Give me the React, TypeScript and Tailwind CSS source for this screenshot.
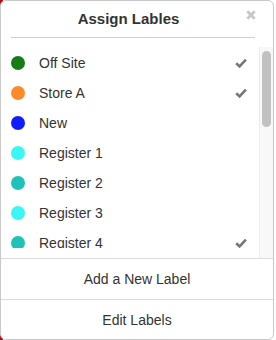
import React from 'react';

type Label = { name: string; color: string; checked?: boolean };

const labels: Label[] = [
  { name: 'Off Site', color: '#167d16', checked: true },
  { name: 'Store A', color: '#ff8a2c', checked: true },
  { name: 'New', color: '#0f1cff' },
  { name: 'Register 1', color: '#3af7f3' },
  { name: 'Register 2', color: '#1fc2b8' },
  { name: 'Register 3', color: '#3af7f3' },
  { name: 'Register 4', color: '#1fc2b8', checked: true },
];

function Check() {
  return (
    <svg width="12" height="10" viewBox="0 0 12 10" className="shrink-0">
      <path d="M1.2 5.2 L4.6 8.4 L10.9 1.6" fill="none" stroke="#777" strokeWidth="2.6" strokeLinejoin="miter" />
    </svg>
  );
}

export default function App() {
  return (
    <div
      className="w-[276px] h-[340px] bg-[linear-gradient(to_right,#a8141e_0,#a8141e_3px,#ffffff_3px)]"
      style={{ fontFamily: '"Liberation Sans", Arial, sans-serif' }}
    >
      <div className="w-[274px] h-[340px] bg-white border border-[#c9c9c9] rounded-[6px] flex flex-col overflow-hidden">
        {/* Header */}
        <div className="px-[10px]">
          <div className="h-[36px] flex items-center">
            <h3 className="flex-1 text-center text-[15px] font-bold text-[#333] leading-[20px] -mt-[1px]">Assign Lables</h3>
            <button className="w-[17px] self-start mt-[9px] flex items-start justify-start">
              <svg width="10" height="10" viewBox="0 0 10 10">
                <path d="M1.3 1.3 L8.7 8.7 M8.7 1.3 L1.3 8.7" stroke="#c8c8c8" strokeWidth="2.8" />
              </svg>
            </button>
          </div>
          <div className="h-px bg-[#cfcfcf] mr-[8px]" />
        </div>

        <div className="h-[9px]" />

        {/* List + scrollbar */}
        <div className="h-[211px] flex">
          <div className="flex-1 flex flex-col">
            <ul className="h-[201px] overflow-hidden pt-[1px]">
              {labels.map((l) => (
                <li key={l.name} className="h-[30px] flex items-center pl-[10px] pr-[12px]">
                  <span className="w-[14px] h-[14px] rounded-full shrink-0" style={{ backgroundColor: l.color }} />
                  <span className="ml-[14px] flex-1 text-[14px] text-[#333]">{l.name}</span>
                  {l.checked && <Check />}
                </li>
              ))}
            </ul>
          </div>
          <div className="w-[14px] border-l border-[#ececec] bg-[#f8f8f8] px-[2px]">
            <div className="mt-[4px] h-[76px] rounded-full bg-[#c1c1c1]" />
          </div>
        </div>

        {/* Footer actions */}
        <button className="h-[41px] pt-[1px] border-t border-[#dcdcdc] text-[14px] text-[#333] text-center">
          Add a New Label
        </button>
        <button className="h-[40px] pt-[1px] border-t border-[#dcdcdc] text-[14px] text-[#333] text-center">
          Edit Labels
        </button>
      </div>
    </div>
  );
}
